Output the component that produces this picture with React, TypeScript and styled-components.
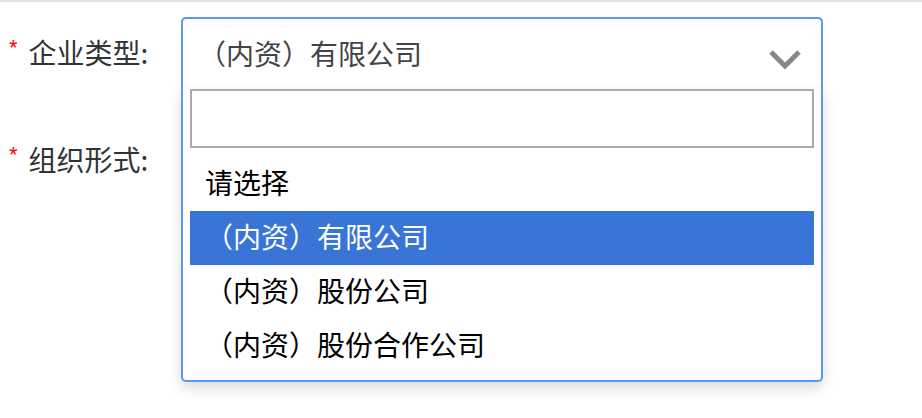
import React from "react";
import styled, { createGlobalStyle } from "styled-components";

const GlobalStyle = createGlobalStyle`
  html, body {
    margin: 0;
    padding: 0;
    background: #fff;
  }
  body {
    font-family: "Noto Sans CJK SC", "Noto Sans", "Liberation Sans", sans-serif;
  }
  * {
    box-sizing: border-box;
  }
`;

const Page = styled.div`
  width: 922px;
  height: 418px;
  border-top: 2px solid #e2e2e2;
  padding-top: 15px;
  display: flex;
  flex-direction: column;
  gap: 35px;
`;

const FormRow = styled.div`
  display: flex;
  align-items: stretch;
  height: 72px;
`;

const Label = styled.label`
  width: 181px;
  flex: none;
  display: flex;
  align-items: center;
  padding-left: 9px;
  padding-bottom: 2px;
  font-size: 28px;
  color: #333;
  white-space: nowrap;
`;

const Required = styled.span`
  font-family: "Liberation Sans", Arial, sans-serif;
  font-size: 22px;
  color: #ff0000;
  margin-right: 11px;
  position: relative;
  top: -4px;
`;

const SelectWrap = styled.div`
  position: relative;
  width: 642px;
`;

const Selection = styled.div`
  height: 72px;
  border: 2px solid #5897fb;
  border-bottom: none;
  border-radius: 5px 5px 0 0;
  display: flex;
  align-items: center;
  justify-content: space-between;
  padding: 0 19px 0 15px;
  background: #fff;
`;

const SelectedText = styled.span`
  font-size: 28px;
  color: #444;
  line-height: 1;
  padding-bottom: 3px;
`;

const Chevron = styled.svg`
  width: 34px;
  height: 22px;
  margin-top: 10px;
  flex: none;
`;

const Dropdown = styled.div`
  position: absolute;
  top: 100%;
  left: 0;
  width: 100%;
  border: 2px solid #5897fb;
  border-top: none;
  border-radius: 0 0 5px 5px;
  background: #fff;
  box-shadow: 0 6px 14px rgba(0, 0, 0, 0.14);
  padding: 0 7px 7px;
  z-index: 10;
`;

const SearchBox = styled.input`
  display: block;
  width: 100%;
  height: 59px;
  border: 2px solid #aaa;
  margin: 0 0 9px;
  padding: 0 10px;
  font-size: 28px;
  font-family: inherit;
  outline: none;
  background: #fff;
`;

const Results = styled.ul`
  list-style: none;
  margin: 0;
  padding: 0;
`;

const Option = styled.li<{ $active?: boolean }>`
  height: 54px;
  display: flex;
  align-items: center;
  padding: 0 0 5px 15px;
  font-size: 28px;
  color: ${(p) => (p.$active ? "#fff" : "#000")};
  background: ${(p) => (p.$active ? "#3875d7" : "transparent")};
  white-space: nowrap;
`;

const options = [
  "请选择",
  "（内资）有限公司",
  "（内资）股份公司",
  "（内资）股份合作公司",
];

export default function App() {
  const selected = "（内资）有限公司";

  return (
    <>
      <GlobalStyle />
      <Page>
        <FormRow>
          <Label>
            <Required>*</Required>企业类型:
          </Label>
          <SelectWrap>
            <Selection>
              <SelectedText>{selected}</SelectedText>
              <Chevron viewBox="0 0 34 22">
                <polyline
                  points="3,4 17,18 31,4"
                  fill="none"
                  stroke="#888"
                  strokeWidth="5"
                />
              </Chevron>
            </Selection>
            <Dropdown>
              <SearchBox type="text" />
              <Results>
                {options.map((o) => (
                  <Option key={o} $active={o === selected}>
                    {o}
                  </Option>
                ))}
              </Results>
            </Dropdown>
          </SelectWrap>
        </FormRow>
        <FormRow>
          <Label>
            <Required>*</Required>组织形式:
          </Label>
        </FormRow>
      </Page>
    </>
  );
}
